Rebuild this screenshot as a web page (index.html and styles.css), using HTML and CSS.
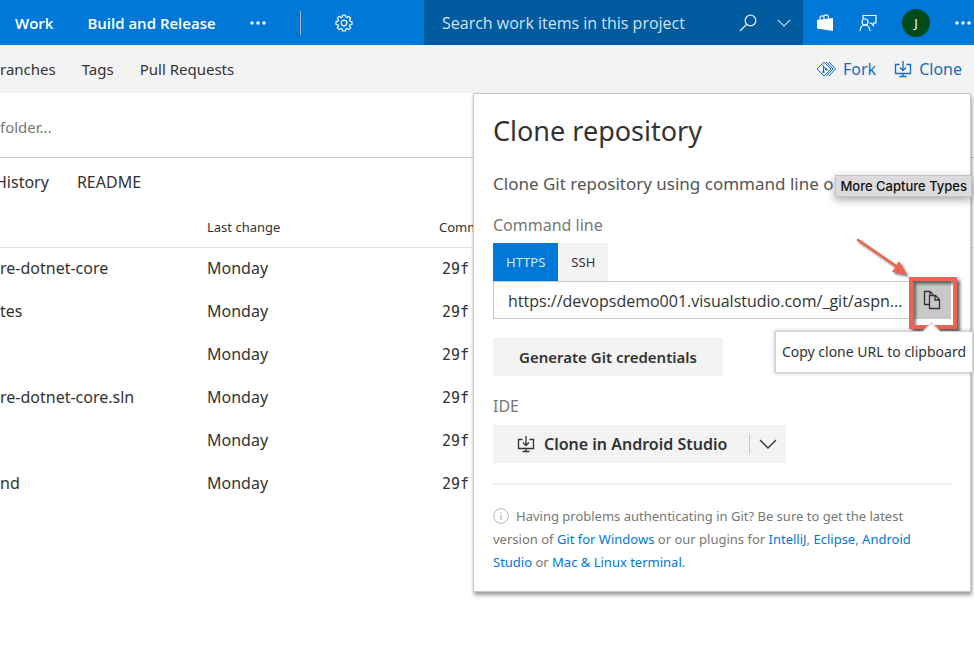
FILE: index.html
```html
<!DOCTYPE html>
<html lang="en">
<head>
<meta charset="utf-8">
<meta name="viewport" content="width=device-width, initial-scale=1">
<title>Clone repository</title>
<link rel="stylesheet" href="styles.css">
</head>
<body>
<svg class="symbols" width="0" height="0" aria-hidden="true">
  <symbol id="download" viewBox="0 0 18 18">
    <path d="M5.5 4.5H1.5V13.5H16.5V4.5H12.5M9 1V10M6 7.5L9 10.5L12 7.5M9 13.5V16.5M5.5 16.5H12.5" fill="none" stroke="currentColor" stroke-width="1.3"/>
  </symbol>
  <symbol id="chevron" viewBox="0 0 18 10">
    <path d="M1 1L9 9L17 1" fill="none" stroke="currentColor" stroke-width="1.3"/>
  </symbol>
  <symbol id="dots" viewBox="0 0 16 4">
    <g fill="currentColor"><circle cx="2" cy="2" r="1.7"/><circle cx="8" cy="2" r="1.7"/><circle cx="14" cy="2" r="1.7"/></g>
  </symbol>
</svg>

<div class="page">
  <header class="topbar">
    <nav class="topnav" aria-label="Project">
      <a href="#">Work</a>
      <a href="#">Build and Release</a>
      <button class="icon-button" aria-label="More"><svg width="16" height="4"><use href="#dots"/></svg></button>
      <span class="rule"></span>
      <button class="icon-button" aria-label="Settings">
        <svg width="18" height="18" viewBox="0 0 18 18" fill="none" stroke="currentColor" stroke-width="1.2" stroke-linejoin="round">
          <path d="M7.5 1H10.5L10.8 3L12.1 3.5L13.8 2.3L15.7 4.2L14.5 5.9L15 7.2L17 7.5V10.5L15 10.8L14.5 12.1L15.7 13.8L13.8 15.7L12.1 14.5L10.8 15L10.5 17H7.5L7.2 15L5.9 14.5L4.2 15.7L2.3 13.8L3.5 12.1L3 10.8L1 10.5V7.5L3 7.2L3.5 5.9L2.3 4.2L4.2 2.3L5.9 3.5L7.2 3Z"/>
          <circle cx="9" cy="9" r="2.8"/>
        </svg>
      </button>
    </nav>
    <form class="search">
      <input type="text" placeholder="Search work items in this project" aria-label="Search work items in this project">
      <button type="button" class="icon-button" aria-label="Search">
        <svg width="18" height="18" viewBox="0 0 18 18" fill="none" stroke="currentColor" stroke-width="1.3"><circle cx="11.5" cy="6.5" r="5.3"/><path d="M7.7 10.3L1 17"/></svg>
      </button>
      <button type="button" class="icon-button" aria-label="Search options"><svg width="14" height="8"><use href="#chevron"/></svg></button>
    </form>
    <div class="account">
      <button class="icon-button" aria-label="Marketplace">
        <svg width="18" height="18" viewBox="0 0 18 18"><path d="M1 6L17 4V17L1 14.5Z" fill="currentColor"/><path d="M4 6V3.5C4 1.5 8 1 8 3.5V5M7.500 3C8 .5 12.500 0 12.500 3V4.500" fill="none" stroke="currentColor" stroke-width="1.200"/></svg>
      </button>
      <button class="icon-button" aria-label="Feedback">
        <svg width="18" height="18" viewBox="0 0 18 18" fill="none" stroke="currentColor" stroke-width="1.200"><path d="M4 5V1.500H17V9H14.500V11.500L12 9H10.500"/><circle cx="6" cy="8" r="3"/><path d="M1 17C1.300 13 3 11 6 11S10.700 13 11 17"/></svg>
      </button>
      <button class="avatar" aria-label="Account J">J</button>
      <button class="icon-button" aria-label="More actions"><svg width="16" height="4"><use href="#dots"/></svg></button>
    </div>
  </header>

  <div class="subbar">
    <nav class="subnav" aria-label="Code">
      <a href="#">ranches</a>
      <a href="#">Tags</a>
      <a href="#">Pull Requests</a>
    </nav>
    <div class="actions">
      <a href="#">
        <svg width="20" height="16" viewBox="0 0 20 16" fill="none" stroke="currentColor" stroke-width="1" stroke-linejoin="round"><path d="M1 8L8 1L15 8L8 15ZM10.500 1L17 8L10.500 15M13 1L19.500 8L13 15M6 3.500L7.500 5V11M7.500 5.500L10.500 8.500"/><circle cx="7.500" cy="11" r=".8" fill="currentColor"/><circle cx="10.500" cy="8.500" r=".8" fill="currentColor"/></svg>
        Fork
      </a>
      <a href="#"><svg width="18" height="18"><use href="#download"/></svg>Clone</a>
    </div>
  </div>

  <main>
    <div class="pathbar">folder...</div>
    <nav class="tabs" aria-label="Views">
      <a href="#">History</a>
      <a href="#">README</a>
    </nav>
    <table class="files">
      <thead>
        <tr><th class="name" aria-label="Name"></th><th class="change">Last change</th><th>Comm</th></tr>
      </thead>
      <tbody>
        <tr><td>re-dotnet-core</td><td>Monday</td><td><code>29f</code></td></tr>
        <tr><td>tes</td><td>Monday</td><td><code>29f</code></td></tr>
        <tr><td></td><td>Monday</td><td><code>29f</code></td></tr>
        <tr><td>re-dotnet-core.sln</td><td>Monday</td><td><code>29f</code></td></tr>
        <tr><td></td><td>Monday</td><td><code>29f</code></td></tr>
        <tr><td>nd</td><td>Monday</td><td><code>29f</code></td></tr>
      </tbody>
    </table>
  </main>

  <section class="popup" aria-labelledby="clone-title">
    <h1 id="clone-title">Clone repository</h1>
    <p class="intro">Clone Git repository using command line o</p>
    <label class="caption" for="clone-url">Command line</label>
    <div class="protocols">
      <button class="selected">HTTPS</button>
      <button>SSH</button>
    </div>
    <div class="url">
      <input id="clone-url" type="text" readonly value="https://devopsdemo001.visualstudio.com/_git/aspn...">
      <button class="copy" aria-label="Copy clone URL to clipboard">
        <svg width="18" height="20" viewBox="0 0 18 20" fill="none" stroke="currentColor" stroke-width="1.300"><path d="M6 14.500H1.500V1.500H7L9.500 4V5M7 1.500V4.500M6.500 5.500H12.500L16.500 9.500V18.500H6.500ZM12 5.500V10H16.500"/></svg>
      </button>
      <span class="marker"></span>
      <svg class="arrow" width="56" height="44" viewBox="0 0 56 44"><path d="M2 3L40 29" stroke="#ee6352" stroke-width="2.500" stroke-linecap="round"/><path d="M51 38L36 35L43 24Z" fill="#ee6352"/></svg>
      <span class="tip" role="tooltip">Copy clone URL to clipboard</span>
    </div>
    <button class="credentials">Generate Git credentials</button>
    <p class="caption">IDE</p>
    <div class="split">
      <button class="ide"><svg width="18" height="18"><use href="#download"/></svg>Clone in Android Studio</button>
      <button class="more" aria-label="Choose an IDE"><svg width="18" height="10"><use href="#chevron"/></svg></button>
    </div>
    <hr>
    <p class="note"><svg width="16" height="16" viewBox="0 0 16 16"><circle cx="8" cy="8" r="7.300" fill="none" stroke="#bbb"/><path d="M8 7V12M8 4V5.500" stroke="#aaa"/></svg>Having problems authenticating in Git? Be sure to get the latest version of <a href="#">Git for Windows</a> or our plugins for <a href="#">IntelliJ</a>, <a href="#">Eclipse</a>, <a href="#">Android Studio</a> or <a href="#">Mac &amp; Linux terminal</a>.</p>
    <span class="system-tip" role="tooltip">More Capture Types</span>
  </section>
</div>
</body>
</html>
```
FILE: styles.css
```css
* { box-sizing: border-box; }

body {
  margin: 0;
  background: #fff;
  color: #333;
  font: 16px/20px "Noto Sans", "Open Sans", sans-serif;
}

h1, p { margin: 0; }
a { color: inherit; text-decoration: none; }
svg { display: block; flex: none; }
.symbols { position: absolute; }

button {
  display: flex;
  align-items: center;
  justify-content: center;
  padding: 0;
  border: 0;
  background: none;
  color: inherit;
  font: inherit;
}

input {
  min-width: 0;
  border: 0;
  outline: 0;
  background: none;
  font: 16px/20px "Open Sans", sans-serif;
}

.page {
  position: relative;
  min-height: 100vh;
  overflow: hidden;
}

/* Top bar */
.topbar {
  display: flex;
  height: 45px;
  background: #0078d7;
  color: #fff;
}

.topnav {
  display: flex;
  flex: 1;
  align-items: center;
  gap: 34px;
  padding-left: 15px;
  font: 600 15px/20px "Open Sans", sans-serif;
  white-space: nowrap;
}

.rule {
  width: 1px;
  height: 24px;
  background: #a9b4be;
}

.search {
  display: flex;
  align-items: center;
  gap: 20px;
  width: 379px;
  padding: 0 12px 0 18px;
  background: #005a9e;
  color: #deecf9;
}

.search input { flex: 1; padding: 0; color: inherit; }
.search input::placeholder { color: #cfe2f3; opacity: 1; }

.account {
  display: flex;
  align-items: center;
  gap: 25px;
  width: 171px;
  padding-left: 13px;
}

.avatar {
  width: 28px;
  height: 28px;
  border-radius: 50%;
  background: #004b1c;
  font-size: 13px;
  flex: none;
}

/* Second bar */
.subbar {
  display: flex;
  align-items: center;
  justify-content: space-between;
  height: 48px;
  padding-right: 12px;
  background: #f3f3f3;
}

.subnav, .actions, .actions a { display: flex; align-items: center; }
.subnav { gap: 26px; font-size: 15px; }
.actions { gap: 18px; color: #106ebe; }
.actions a { gap: 7px; }

/* Repository content */
.pathbar {
  padding: 24px 0 20px;
  border-bottom: 1px solid #c8c8c8;
  color: #777;
  font-size: 15px;
}

.tabs {
  display: flex;
  gap: 28px;
  margin-left: -5px;
  padding: 14px 0 16px;
}

.files {
  width: 100%;
  border-collapse: collapse;
  table-layout: fixed;
}

.files th, .files td {
  padding: 0;
  text-align: left;
  font-weight: 400;
}

.files th { height: 39px; border-bottom: 1px solid #e2e2e2; font-size: 13px; }
.files td { height: 43px; padding-bottom: 2px; }
.files .name { width: 207px; }
.files .change { width: 232px; }
.files code { padding-left: 3px; font: 15px "DejaVu Sans Mono", monospace; }

/* Clone popup */
.popup {
  position: absolute;
  top: 93px;
  right: 3px;
  width: 498px;
  padding: 21px 19px 17px;
  border: 1px solid #c8c8c8;
  background: #fff;
  box-shadow: 1px 3px 4px rgba(0, 0, 0, .4);
}

.popup h1 { font-size: 27px; line-height: 32px; font-weight: 400; }
.intro { margin-top: 25px; color: #555; font-size: 17px; line-height: 24px; white-space: nowrap; }
.caption { display: block; margin-top: 20px; color: #777; }
label.caption { margin-top: 19px; }

.protocols { display: flex; margin-top: 8px; }
.protocols button { height: 38px; padding: 0 13px; background: #f3f3f3; font-size: 13px; }
.protocols .selected { background: #0078d7; color: #d5e9fa; }

.url {
  position: relative;
  display: flex;
  height: 38px;
  border: 1px solid #c8c8c8;
}

.url input { flex: 1; padding: 2px 0 0 14px; color: #333; }
.copy { width: 36px; background: #c8c8c8; }

.marker {
  position: absolute;
  top: -5px;
  right: -7px;
  width: 48px;
  height: 52px;
  border: 4px solid #ee6352;
  box-shadow: 3px 3px 3px rgba(0, 0, 0, .6), inset 3px 3px 3px rgba(0, 0, 0, .5);
}

.arrow {
  position: absolute;
  right: 38px;
  bottom: 37px;
  filter: drop-shadow(2px 2px 1px rgba(0, 0, 0, .5));
}

.tip {
  position: absolute;
  top: 49px;
  right: -23px;
  padding: 10px 6px;
  border: 1px solid #d0d0d0;
  background: #fff;
  box-shadow: 0 0 4px rgba(0, 0, 0, .3);
  font-size: 14px;
  white-space: nowrap;
}

.tip::before {
  content: "";
  position: absolute;
  top: -7px;
  right: 34px;
  width: 12px;
  height: 12px;
  border: solid #d0d0d0;
  border-width: 1px 0 0 1px;
  background: #fff;
  transform: rotate(45deg);
}

.credentials {
  height: 38px;
  margin-top: 19px;
  padding: 0 26px;
  background: #f3f3f3;
  font-size: 15px;
  font-weight: 600;
}

.split {
  display: flex;
  align-items: center;
  width: fit-content;
  height: 38px;
  margin-top: 9px;
  background: #f3f3f3;
}

.ide { gap: 9px; padding: 0 22px 0 24px; font-weight: 600; }
.more { height: 20px; padding: 0 9px; border-left: 1px solid #c8c8c8; }

.popup hr { margin: 20px 0; border: 0; border-top: 2px solid #eee; }

.note { color: #777; font-size: 13px; line-height: 23px; }
.note svg { display: inline-block; margin-right: 7px; vertical-align: -3px; }
.note a { color: #0078d7; }

.system-tip {
  position: absolute;
  top: 81px;
  right: -2px;
  padding: 0 4px;
  border: 1px solid #c4c4c4;
  background: #dcdadc;
  box-shadow: 0 3px 8px rgba(0, 0, 0, .35);
  color: #111;
  font: 500 13px/20px Inter, sans-serif;
  white-space: nowrap;
}
```
